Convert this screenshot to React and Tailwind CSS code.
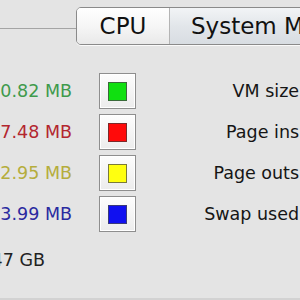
const rows = [
  { value: "10.82 MB", text: "text-[#3f9a4c]", fill: "bg-[#10e010]", edge: "border-[#3a6a3a]", label: "VM size:" },
  { value: "17.48 MB", text: "text-[#b3262f]", fill: "bg-[#ff0a0a]", edge: "border-[#7a2a2a]", label: "Page ins:" },
  { value: "22.95 MB", text: "text-[#b5ad3c]", fill: "bg-[#ffff10]", edge: "border-[#7a7a3a]", label: "Page outs:" },
  { value: "23.99 MB", text: "text-[#2a2aa0]", fill: "bg-[#1010f0]", edge: "border-[#3a3a7a]", label: "Swap used:" },
];

function Swatch({ fill, edge }) {
  return (
    <div className="w-[37px] h-[36px] border border-[#8e8e8e] bg-gradient-to-b from-[#fdfdfd] to-[#ececec] flex items-center justify-center shadow-[inset_0_0_0_1px_#fff]">
      <div className={`w-[19px] h-[19px] border ${edge} ${fill}`} />
    </div>
  );
}

export default function App() {
  return (
    <div
      className="w-[300px] h-[300px] overflow-hidden bg-[#e4e4e4] flex flex-col"
      style={{ fontFamily: '"DejaVu Sans", "Liberation Sans", sans-serif' }}
    >
      <div className="flex items-start pt-[7px] h-[45px]">
        <div className="w-[76px] shrink-0 h-px mt-[21px] bg-[#a4a4a4]" />
        <div className="flex h-[38px] border border-[#8a8a8a] rounded-[5px] overflow-hidden shrink-0 shadow-[0_1px_0_#fafafa]">
          <div className="w-[93px] bg-gradient-to-b from-[#ffffff] via-[#f6f6f6] to-[#e9e9e9] flex items-center justify-center text-[23px] text-[#111] border-r border-[#b4b4b4]">
            CPU
          </div>
          <div className="w-[180px] bg-gradient-to-b from-[#f2f4f6] via-[#e2e6ea] to-[#d8dde2] flex items-center pl-[21px] text-[23px] text-[#111] whitespace-nowrap">
            System Memory
          </div>
        </div>
      </div>

      <div className="flex flex-col gap-[5px] mt-[28px]">
        {rows.map((r) => (
          <div key={r.label} className="flex items-center h-[36px]">
            <div className={`w-[72px] shrink-0 flex justify-end whitespace-nowrap text-[17.5px] ${r.text}`}>
              {r.value}
            </div>
            <div className="ml-[27px] shrink-0">
              <Swatch fill={r.fill} edge={r.edge} />
            </div>
            <div className="w-[169px] shrink-0 flex justify-end whitespace-nowrap text-[17.5px] text-[#151515]">
              {r.label}
            </div>
          </div>
        ))}
      </div>

      <div className="mt-[17px] w-[45px] flex justify-end whitespace-nowrap text-[17.5px] leading-[22px] text-[#222]">
        47 GB
      </div>

      <div className="mt-auto h-[2px] bg-[#d2d2d2]" />
    </div>
  );
}
